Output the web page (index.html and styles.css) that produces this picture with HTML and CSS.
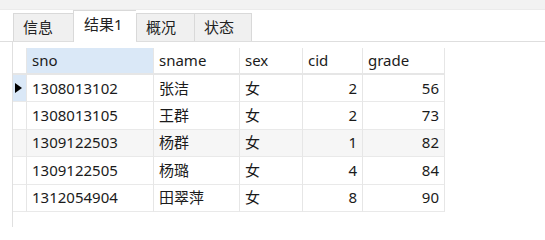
FILE: index.html
```html
<!DOCTYPE html>
<html lang="zh">
<head>
<meta charset="utf-8">
<title>结果1</title>
<link rel="stylesheet" href="styles.css">
</head>
<body>
<div class="topbar"></div>
<div class="tabs">
  <div class="tab t1">信息</div>
  <div class="tab t2 active">结果1</div>
  <div class="tab t3">概况</div>
  <div class="tab t4">状态</div>
</div>
<div class="panel">
  <div class="grid">
    <div class="row head">
      <div class="cell rh"></div>
      <div class="cell sel">sno</div>
      <div class="cell">sname</div>
      <div class="cell">sex</div>
      <div class="cell">cid</div>
      <div class="cell">grade</div>
    </div>
    <div class="row">
      <div class="cell rh cur"><span class="arrow"></span></div>
      <div class="cell">1308013102</div>
      <div class="cell">张洁</div>
      <div class="cell">女</div>
      <div class="cell num">2</div>
      <div class="cell num">56</div>
    </div>
    <div class="row">
      <div class="cell rh"></div>
      <div class="cell">1308013105</div>
      <div class="cell">王群</div>
      <div class="cell">女</div>
      <div class="cell num">2</div>
      <div class="cell num">73</div>
    </div>
    <div class="row alt">
      <div class="cell rh"></div>
      <div class="cell">1309122503</div>
      <div class="cell">杨群</div>
      <div class="cell">女</div>
      <div class="cell num">1</div>
      <div class="cell num">82</div>
    </div>
    <div class="row">
      <div class="cell rh"></div>
      <div class="cell">1309122505</div>
      <div class="cell">杨璐</div>
      <div class="cell">女</div>
      <div class="cell num">4</div>
      <div class="cell num">84</div>
    </div>
    <div class="row">
      <div class="cell rh"></div>
      <div class="cell">1312054904</div>
      <div class="cell">田翠萍</div>
      <div class="cell">女</div>
      <div class="cell num">8</div>
      <div class="cell num">90</div>
    </div>
  </div>
</div>
</body>
</html>
```
FILE: styles.css
```css
html, body {
  margin: 0;
  padding: 0;
  background: #ffffff;
}
body {
  width: 545px;
  height: 227px;
  overflow: hidden;
  font-family: "Noto Sans", "Noto Sans CJK SC", sans-serif;
  font-size: 15px;
  color: #1b1b1b;
}
.topbar {
  height: 9px;
  background: #f2f2f2;
  border-bottom: 1px solid #ebebeb;
}
.tabs {
  display: flex;
  align-items: flex-end;
  height: 31px;
  padding-left: 13px;
  border-bottom: 1px solid #dedede;
}
.tab {
  box-sizing: border-box;
  height: 28px;
  background: #f0f0f0;
  border: 1px solid #d9d9d9;
  border-bottom: none;
  border-right: none;
  display: flex;
  align-items: center;
  padding-left: 9px;
  color: #222;
  line-height: 1;
}
.tab.t4 { border-right: 1px solid #d9d9d9; }
.t1 { width: 60px; }
.t2 { width: 63px; }
.t3 { width: 58px; }
.t4 { width: 58px; }
.tab.active {
  height: 32px;
  margin-bottom: -1px;
  background: #ffffff;
  padding-bottom: 4px;
  padding-left: 10px;
}
.panel {
  margin-left: 12px;
  border-left: 1px solid #e0e0e0;
  padding-top: 6px;
  height: 180px;
}
.grid {
  display: flex;
  flex-direction: column;
  width: 432px;
}
.row {
  display: grid;
  grid-template-columns: 14px 127px 86px 63px 60px 82px;
  height: 27.4px;
}
.row.head { height: 27px; }
.row.alt { background: #f6f6f6; }
.cell {
  box-sizing: border-box;
  border-right: 1px solid #e6e6e6;
  border-bottom: 1px solid #e9e9e9;
  padding: 0 5px 0 5px;
  display: flex;
  align-items: center;
  white-space: nowrap;
  line-height: 1;
}
.head .cell { border-bottom: 2px solid #e6e6e6; }
.cell.sel { background: #dae8f7; }
.cell.num { justify-content: flex-end; }
.cell.rh { padding: 0; }
.cell.rh.cur { background: #dae8f7; }
.arrow {
  width: 0;
  height: 0;
  margin-left: 2px;
  border-top: 5px solid transparent;
  border-bottom: 5px solid transparent;
  border-left: 7px solid #000;
}
```
